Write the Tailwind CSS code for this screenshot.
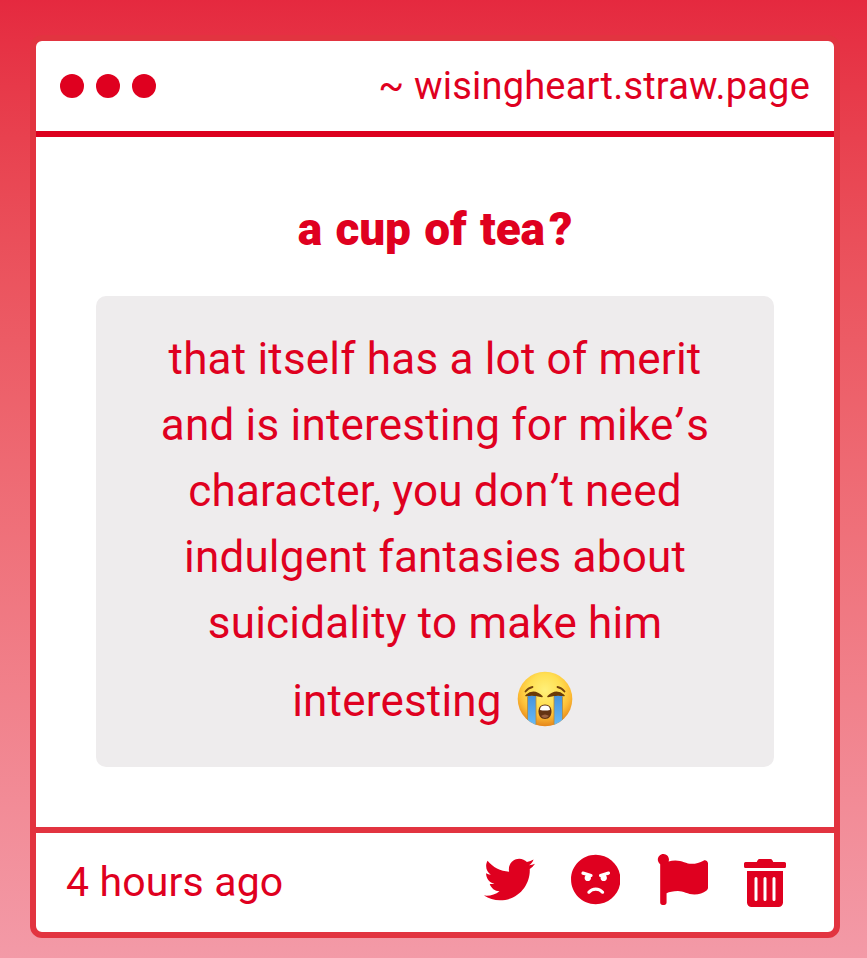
<!doctype html>
<html lang="en">
<head>
    <meta charset="UTF-8"/>
    <meta name="viewport" content="width=device-width, initial-scale=1.0"/>
    <title>a cup of tea?</title>
    <script src="https://cdn.jsdelivr.net/npm/@tailwindcss/browser@4"></script>
</head>
<body class="h-screen w-screen overflow-hidden bg-linear-to-b from-[#e5293f] to-[#f39aa7] pt-[35px] pl-[30px] font-['Roboto',sans-serif] text-[#df001f]">
<div class="flex flex-col w-[810px] h-[903px] rounded-xl border-6 border-[#e23440] bg-white">
    <div class="flex items-center justify-between h-24 shrink-0 border-b-6 border-[#dc001e] px-6">
        <div class="flex gap-3">
            <span class="size-6 rounded-full bg-[#df001f]"></span>
            <span class="size-6 rounded-full bg-[#df001f]"></span>
            <span class="size-6 rounded-full bg-[#df001f]"></span>
        </div>
        <p class="text-[38px] leading-[50px] tracking-[0.2px] whitespace-nowrap">~ wisingheart.straw.page</p>
    </div>
    <div class="flex flex-col grow items-center px-[60px] pt-[62px]">
        <h1 class="text-[46px] leading-[60px] font-black tracking-[-0.1px] [word-spacing:2px]">a cup of tea<span class="ml-[4px]">?</span></h1>
        <div class="mt-[37px] h-[471px] w-full rounded-[10px] bg-[#eeeced] pt-[30px] text-center text-[44px] leading-[66px] tracking-[0.2px] whitespace-nowrap">
            <p>that itself has a lot of merit</p>
            <p>and is interesting for mike<span class="ml-[-1px] mr-[5px] italic">’</span>s</p>
            <p>character, you don<span class="ml-[-1px] mr-[3px] italic">’</span>t need</p>
            <p>indulgent fantasies about</p>
            <p>suicidality to make him</p>
            <div class="mt-3 flex justify-center gap-[15px] pr-[5px]">
                <span>interesting</span>
                <!-- crying emoji -->
                <svg class="mt-[3px] size-14" viewBox="0 0 56 56" fill="none">
                    <defs>
                        <radialGradient id="face" cx=".5" cy=".34" r=".66">
                            <stop offset="0" stop-color="#fff07a"/>
                            <stop offset=".45" stop-color="#ffdf52"/>
                            <stop offset=".72" stop-color="#fdbd35"/>
                            <stop offset="1" stop-color="#e5851a"/>
                        </radialGradient>
                        <linearGradient id="tear" x1="0" y1="0" x2="0" y2="1">
                            <stop offset="0" stop-color="#4593df"/>
                            <stop offset="1" stop-color="#69bdf8"/>
                        </linearGradient>
                        <clipPath id="round"><circle cx="28" cy="28" r="27.3"/></clipPath>
                    </defs>
                    <circle cx="28" cy="28" r="27.3" fill="url(#face)"/>
                    <g clip-path="url(#round)">
                        <path d="M10.500 24.500h8.500v32h-8.500zM37 24.500h8.500v32h-8.500z" fill="url(#tear)"/>
                        <path d="M10.500 26v30M19 26v30M37 26v30M45.500 26v30" stroke="#b88a38" stroke-width=".8"/>
                    </g>
                    <path d="M9 24.500Q17 17.500 25 25.500Q17 23 9 24.500ZM31 25.500Q39 17.500 47 24.500Q39 23 31 25.500Z" fill="#6b3b08" stroke="#6b3b08" stroke-width="1.500" stroke-linejoin="round"/>
                    <path d="M8.500 20.500Q11 17 15.500 16M40.500 16Q45 17 47.500 20.500" stroke="#75430c" stroke-width="1.800" stroke-linecap="round"/>
                    <path d="M28 33.500c-4.300 0-6.500 3-6.500 7s2.200 7.500 6.500 7.500 6.500-3.500 6.500-7.500-2.200-7-6.500-7z" fill="#633313"/>
                    <path d="M23 39c0-3.200 1.700-4.500 5-4.500s5 1.300 5 4.500q-5 1-10 0z" fill="#fff"/>
                    <path d="M24 45q4-3 8 0-4 4-8 0z" fill="#9d6240"/>
                </svg>
            </div>
        </div>
    </div>
    <div class="flex items-start justify-between h-[105px] shrink-0 border-t-6 border-[#e23440] pl-[30px] pr-12">
        <p class="mt-6 text-[41px] leading-[50px] tracking-[0.15px] whitespace-nowrap">4 hours ago</p>
        <div class="flex items-start pt-[21px] fill-[#df001f]">
            <svg class="mr-px size-[51px]" viewBox="0 0 512 512"><path d="M459.370 151.716c.325 4.548.325 9.097.325 13.645 0 138.720-105.583 298.558-298.558 298.558-59.452 0-114.680-17.219-161.137-47.106 8.447.974 16.568 1.299 25.340 1.299 49.055 0 94.213-16.568 130.274-44.832-46.132-.975-84.792-31.188-98.112-72.772 6.498.974 12.995 1.624 19.818 1.624 9.421 0 18.843-1.300 27.614-3.573-48.081-9.747-84.143-51.980-84.143-102.985v-1.299c13.969 7.797 30.214 12.670 47.431 13.319-28.264-18.843-46.781-51.005-46.781-87.391 0-19.492 5.197-37.360 14.294-52.954 51.655 63.675 129.300 105.258 216.365 109.807-1.624-7.797-2.599-15.918-2.599-24.040 0-57.828 46.782-104.934 104.934-104.934 30.213 0 57.502 12.670 76.670 33.137 23.715-4.548 46.456-13.320 66.599-25.340-7.798 24.366-24.366 44.833-46.132 57.827 21.117-2.273 41.584-8.122 60.426-16.243-14.292 20.791-32.161 39.308-52.628 54.253z"/></svg>
            <svg class="ml-[35px] mr-px w-[49.5px] h-[51px]" viewBox="0 0 496 512"><path d="M248 8C111 8 0 119 0 256s111 248 248 248 248-111 248-248S385 8 248 8zM136 240c0-9.300 4.100-17.500 10.500-23.400l-31-9.300c-8.500-2.500-13.300-11.500-10.700-19.900 2.500-8.500 11.400-13.200 19.900-10.700l80 24c8.500 2.500 13.300 11.500 10.700 19.900-2.100 6.900-8.400 11.400-15.300 11.400-.5 0-1.100-.2-1.700-.2.7 2.700 1.700 5.300 1.700 8.200 0 17.700-14.300 32-32 32S136 257.700 136 240zm168 154.200c-27.800-33.400-84.200-33.400-112.100 0-13.500 16.300-38.200-4.200-24.600-20.500 20-24 49.400-37.600 80.600-37.600s60.600 13.800 80.600 37.600c13.800 16.500-11.100 36.600-24.500 20.500zm76.600-186.900l-31 9.300c6.300 5.800 10.500 14.100 10.500 23.400 0 17.700-14.300 32-32 32s-32-14.300-32-32c0-2.900.9-5.600 1.700-8.200-.6.1-1.100.2-1.700.2-6.900 0-13.200-4.500-15.300-11.400-2.500-8.500 2.300-17.400 10.700-19.900l80-24c8.400-2.500 17.400 2.300 19.900 10.700 2.500 8.500-2.300 17.400-10.800 19.900z"/></svg>
            <svg class="ml-9 size-[51px]" viewBox="0 0 512 512"><path d="M349.565 98.783C295.978 98.783 251.721 64 184.348 64c-24.955 0-47.309 4.384-68.045 12.013a55.947 55.947 0 0 0 3.586-23.562C118.117 24.015 94.806 1.206 66.338.048 34.345-1.254 8 24.296 8 56c0 19.026 9.497 35.825 24 45.945V488c0 13.255 10.745 24 24 24h16c13.255 0 24-10.745 24-24v-94.400c28.311-12.064 63.582-22.122 114.435-22.122 53.588 0 97.844 34.783 165.217 34.783 48.169 0 86.667-16.294 122.505-40.858C506.840 359.452 512 349.571 512 339.045v-243.100c0-23.393-24.269-38.870-45.485-29.016-34.338 15.948-76.454 31.854-116.950 31.854z"/></svg>
            <svg class="ml-9 mt-[5px] w-[42px] h-12" viewBox="0 0 448 512"><path d="M32 464a48 48 0 0 0 48 48h288a48 48 0 0 0 48-48V128H32zm272-256a16 16 0 0 1 32 0v224a16 16 0 0 1-32 0zm-96 0a16 16 0 0 1 32 0v224a16 16 0 0 1-32 0zm-96 0a16 16 0 0 1 32 0v224a16 16 0 0 1-32 0zM432 32H312l-9.400-18.700A24 24 0 0 0 281.100 0H166.800a23.720 23.720 0 0 0-21.400 13.300L136 32H16A16 16 0 0 0 0 48v32a16 16 0 0 0 16 16h416a16 16 0 0 0 16-16V48a16 16 0 0 0-16-16z"/></svg>
        </div>
    </div>
</div>
</body>
</html>
